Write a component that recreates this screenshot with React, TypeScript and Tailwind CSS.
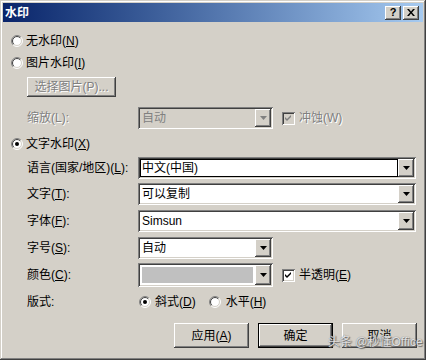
import React from "react";

const FONT = { fontFamily: '"Liberation Sans","Noto Sans CJK SC",sans-serif' };

const raised =
  "shadow-[inset_-1px_-1px_#404040,inset_1px_1px_#ffffff,inset_-2px_-2px_#808080,inset_2px_2px_#d4d0c8]";
const sunken =
  "shadow-[inset_1px_1px_#808080,inset_-1px_-1px_#ffffff,inset_2px_2px_#404040,inset_-2px_-2px_#d4d0c8]";

function Radio({ checked }: { checked?: boolean }) {
  const r1 = 5.5;
  const r2 = 4.5;
  const p = (r: number) => {
    const d = r * 0.7071;
    return { x1: 6 - d, y1: 6 + d, x2: 6 + d, y2: 6 - d };
  };
  const a = p(r1);
  const b = p(r2);
  return (
    <svg width="12" height="12" viewBox="0 0 12 12" className="shrink-0">
      <circle cx="6" cy="6" r="5" fill="#ffffff" />
      <path d={`M${a.x1},${a.y1} A${r1},${r1} 0 0 1 ${a.x2},${a.y2}`} stroke="#808080" fill="none" />
      <path d={`M${a.x2},${a.y2} A${r1},${r1} 0 0 1 ${a.x1},${a.y1}`} stroke="#ffffff" fill="none" />
      <path d={`M${b.x1},${b.y1} A${r2},${r2} 0 0 1 ${b.x2},${b.y2}`} stroke="#404040" fill="none" />
      <path d={`M${b.x2},${b.y2} A${r2},${r2} 0 0 1 ${b.x1},${b.y1}`} stroke="#d4d0c8" fill="none" />
      {checked && <circle cx="6" cy="6" r="2" fill="#000000" />}
    </svg>
  );
}

function Check({ disabled }: { disabled?: boolean }) {
  return (
    <div
      className={`w-[13px] h-[13px] shrink-0 flex items-center justify-center ${sunken} ${
        disabled ? "bg-[#d4d0c8]" : "bg-white"
      }`}
    >
      <svg width="7" height="7" viewBox="0 0 7 7">
        <path d="M0,2 L2,4 L6,0 L6,2 L2,6 L0,4 Z" fill={disabled ? "#808080" : "#000000"} />
      </svg>
    </div>
  );
}

function Arrow({ disabled }: { disabled?: boolean }) {
  return (
    <div className={`w-[16px] h-full shrink-0 bg-[#d4d0c8] flex items-center justify-center ${raised}`}>
      <svg width="7" height="4" viewBox="0 0 7 4">
        <path d="M0,0 L7,0 L3.5,4 Z" fill={disabled ? "#808080" : "#000000"} />
      </svg>
    </div>
  );
}

function Combo({
  w,
  text,
  disabled,
  color,
  focus,
  h = 22,
}: {
  w: string;
  text?: string;
  disabled?: boolean;
  color?: boolean;
  focus?: boolean;
  h?: number;
}) {
  return (
    <div
      className={`${w} ${h === 24 ? "h-[24px]" : "h-[22px]"} p-[2px] flex ${sunken} ${
        disabled ? "bg-[#d4d0c8]" : "bg-white"
      }`}
    >
      <div className="flex-1 h-full flex items-center min-w-0">
        {color ? (
          <div className="w-full h-full p-[2px]">
            <div className="w-full h-full bg-[#c0c0c0]" />
          </div>
        ) : focus ? (
          <div className="w-full h-full border border-black flex items-center pl-[1px]">
            <span className="text-[12px] leading-none text-black">{text}</span>
          </div>
        ) : (
          <span
            className={`pl-[2px] text-[12px] leading-none ${
              disabled ? "text-[#808080]" : "text-black"
            }`}
          >
            {text}
          </span>
        )}
      </div>
      <Arrow disabled={disabled} />
    </div>
  );
}

function U({ c }: { c: string }) {
  return <span className="underline underline-offset-[1px]">{c}</span>;
}

function Btn({
  children,
  def,
  disabled,
  w = "w-[75px]",
  h = "h-[25px]",
}: {
  children: React.ReactNode;
  def?: boolean;
  disabled?: boolean;
  w?: string;
  h?: string;
}) {
  return (
    <div
      className={`${w} ${h} bg-[#d4d0c8] flex items-center justify-center text-[12px] leading-none ${
        def
          ? "shadow-[inset_1px_1px_#000,inset_-1px_-1px_#000,inset_-2px_-2px_#404040,inset_2px_2px_#ffffff,inset_-3px_-3px_#808080]"
          : raised
      } ${disabled ? "text-[#808080] [text-shadow:1px_1px_#ffffff]" : "text-black"}`}
    >
      {children}
    </div>
  );
}

export default function App() {
  return (
    <div
      style={FONT}
      className="w-[426px] h-[360px] bg-[#d4d0c8] p-[3px] flex flex-col relative overflow-hidden shadow-[inset_-1px_-1px_#404040,inset_1px_1px_#d4d0c8,inset_-2px_-2px_#808080,inset_2px_2px_#ffffff]"
    >
      {/* title bar */}
      <div className="h-[19px] flex items-center justify-between pl-[2px] pr-[4px] bg-gradient-to-r from-[#0a246a] to-[#a6caf0]">
        <span className="text-white font-bold text-[12px] leading-none">水印</span>
        <div className="flex gap-[2px]">
          <div className={`w-[16px] h-[14px] bg-[#d4d0c8] flex items-center justify-center ${raised}`}>
            <span className="text-[11px] font-bold leading-none text-black">?</span>
          </div>
          <div className={`w-[16px] h-[14px] bg-[#d4d0c8] flex items-center justify-center ${raised}`}>
            <svg width="8" height="7" viewBox="0 0 8 7">
              <path d="M0,0 L2,0 L4,2.5 L6,0 L8,0 L5,3.5 L8,7 L6,7 L4,4.5 L2,7 L0,7 L3,3.5 Z" fill="#000" />
            </svg>
          </div>
        </div>
      </div>

      <div className="flex flex-col text-[12px] text-black">
        {/* 无水印 */}
        <div className="mt-[11px] h-[16px] flex items-center pl-[8px] gap-[3px]">
          <Radio />
          <span className="leading-none">
            无水印(<U c="N" />)
          </span>
        </div>
        {/* 图片水印 */}
        <div className="mt-[6px] h-[16px] flex items-center pl-[8px] gap-[3px]">
          <Radio />
          <span className="leading-none">
            图片水印(<U c="I" />)
          </span>
        </div>
        {/* 选择图片 */}
        <div className="mt-[6px] pl-[24px] flex">
          <Btn disabled w="w-[89px]" h="h-[20px]">
            选择图片(P)...
          </Btn>
        </div>
        {/* 缩放 */}
        <div className="mt-[10px] h-[22px] flex items-center pl-[24px]">
          <span className="w-[111px] leading-none text-[#808080] [text-shadow:1px_1px_#ffffff]">缩放(L):</span>
          <Combo w="w-[135px]" text="自动" disabled />
          <div className="ml-[9px] flex items-center gap-[4px]">
            <Check disabled />
            <span className="leading-none text-[#808080] [text-shadow:1px_1px_#ffffff]">冲蚀(W)</span>
          </div>
        </div>
        {/* 文字水印 */}
        <div className="mt-[7px] h-[16px] flex items-center pl-[8px] gap-[3px]">
          <Radio checked />
          <span className="leading-none">
            文字水印(<U c="X" />)
          </span>
        </div>
        {/* 语言 */}
        <div className="mt-[5px] h-[22px] flex items-center pl-[24px]">
          <span className="w-[111px] leading-none">
            语言(国家/地区)(<U c="L" />):
          </span>
          <Combo w="w-[278px]" text="中文(中国)" focus />
        </div>
        {/* 文字 */}
        <div className="mt-[4px] h-[22px] flex items-center pl-[24px]">
          <span className="w-[111px] leading-none">
            文字(<U c="T" />):
          </span>
          <Combo w="w-[278px]" text="可以复制" />
        </div>
        {/* 字体 */}
        <div className="mt-[5px] h-[22px] flex items-center pl-[24px]">
          <span className="w-[111px] leading-none">
            字体(<U c="F" />):
          </span>
          <Combo w="w-[278px]" text="Simsun" />
        </div>
        {/* 字号 */}
        <div className="mt-[5px] h-[22px] flex items-center pl-[24px]">
          <span className="w-[111px] leading-none">
            字号(<U c="S" />):
          </span>
          <Combo w="w-[135px]" text="自动" />
        </div>
        {/* 颜色 */}
        <div className="mt-[4px] h-[24px] flex items-center pl-[24px]">
          <span className="w-[111px] leading-none">
            颜色(<U c="C" />):
          </span>
          <Combo w="w-[135px]" color h={24} />
          <div className="ml-[9px] flex items-center gap-[4px]">
            <Check />
            <span className="leading-none">
              半透明(<U c="E" />)
            </span>
          </div>
        </div>
        {/* 版式 */}
        <div className="mt-[7px] h-[16px] flex items-center pl-[24px]">
          <span className="w-[112px] leading-none">版式:</span>
          <div className="flex items-center gap-[4px]">
            <Radio checked />
            <span className="leading-none">
              斜式(<U c="D" />)
            </span>
          </div>
          <div className="ml-[13px] flex items-center gap-[5px]">
            <Radio />
            <span className="leading-none">
              水平(<U c="H" />)
            </span>
          </div>
        </div>
        {/* buttons */}
        <div className="mt-[13px] flex justify-end gap-[9px] pr-[6px]">
          <Btn>
            应用(<U c="A" />)
          </Btn>
          <Btn def>确定</Btn>
          <Btn>取消</Btn>
        </div>
      </div>

      {/* watermark overlay */}
      <div className="absolute left-[328px] top-[336px] text-[12px] leading-none text-white/80 [text-shadow:0_0_1px_#555,1px_1px_1px_#666]">
        头条 @秒懂Office
      </div>
    </div>
  );
}
